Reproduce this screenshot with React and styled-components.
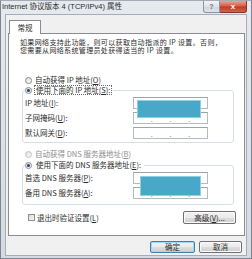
import styled, { createGlobalStyle } from "styled-components";

const GlobalStyle = createGlobalStyle`
  html, body {
    margin: 0;
    padding: 0;
    background: #ffffff;
  }
  body {
    font-family: "Noto Sans CJK SC", "Liberation Sans", sans-serif;
    font-size: 7.5px;
    line-height: 8px;
    color: #2b2b2b;
  }
  * {
    box-sizing: border-box;
  }
`;

const Window = styled.div`
  width: 252px;
  height: 259px;
  display: flex;
  flex-direction: column;
  background: linear-gradient(180deg, #e6e9ee 0%, #d5dae1 100%);
  border: 1px solid #7b8692;
  border-top-color: #a3acb6;
`;

const TitleBar = styled.div`
  height: 13px;
  display: flex;
  align-items: flex-start;
  padding-left: 1px;
  padding-right: 4px;
`;

const Title = styled.div`
  flex: 1;
  padding-top: 2px;
  font-family: "Liberation Sans", "Noto Sans CJK SC", sans-serif;
  color: #2a2a2a;
  white-space: nowrap;
`;

const CaptionButton = styled.div`
  height: 12px;
  width: ${(p) => p.$w}px;
  display: flex;
  align-items: center;
  justify-content: center;
  font-family: "Liberation Sans", sans-serif;
  font-weight: bold;
  font-size: ${(p) => (p.$close ? 8 : 7)}px;
  color: ${(p) => (p.$close ? "#ffffff" : "#6b7480")};
  border: 1px solid ${(p) => (p.$close ? "#8a3426" : "#8b95a1")};
  border-top: none;
  border-left: ${(p) => (p.$close ? "none" : undefined)};
  border-radius: ${(p) => (p.$close ? "0 0 3px 0" : "0 0 0 3px")};
  background: ${(p) =>
    p.$close
      ? "linear-gradient(180deg, #e9a295 0%, #d5604a 45%, #c13b25 55%, #d7614a 100%)"
      : "linear-gradient(180deg, #f2f4f7 0%, #dde2e8 50%, #cfd5dd 55%, #dfe4ea 100%)"};
`;

const Client = styled.div`
  flex: 1;
  margin: 0 4px 2px 4px;
  background: #f0f0f0;
  border: 1px solid #a4adb8;
  padding: 5px 1px 0 2px;
  display: flex;
  flex-direction: column;
`;

const Tab = styled.div`
  width: 32px;
  height: 14px;
  margin-left: 1px;
  margin-bottom: -1px;
  position: relative;
  z-index: 1;
  background: #ffffff;
  border: 1px solid #898c95;
  border-bottom: none;
  display: flex;
  align-items: center;
  justify-content: center;
  padding-top: 1px;
`;

const Panel = styled.div`
  height: 203px;
  background: #ffffff;
  border: 1px solid #898c95;
  display: flex;
  flex-direction: column;
`;

const Description = styled.div`
  margin-top: 4px;
  padding-left: 11px;
  font-size: 7px;
  line-height: 8px;
  letter-spacing: 0.35px;
  white-space: nowrap;
`;

const OptionRow = styled.div`
  display: flex;
  align-items: center;
  gap: 3px;
  height: 8px;
  margin-top: ${(p) => p.$top}px;
  padding-left: 16px;
  color: ${(p) => (p.$disabled ? "#8e8e8e" : "inherit")};
`;

const Radio = styled.span`
  width: 7px;
  height: 7px;
  flex-shrink: 0;
  border-radius: 50%;
  border: 1px solid ${(p) => (p.$disabled ? "#c2c2c2" : "#8a8a8a")};
  background: linear-gradient(135deg, #dcdcdc 0%, #fbfbfb 100%);
  display: flex;
  align-items: center;
  justify-content: center;
  &::after {
    content: "";
    width: 3px;
    height: 3px;
    border-radius: 50%;
    background: ${(p) => (p.$checked ? "#1d3f6e" : "transparent")};
  }
`;

const Group = styled.fieldset`
  margin: ${(p) => p.$top}px 0 0 13px;
  width: 212px;
  padding: 2px 2px ${(p) => p.$bottom}px 2px;
  border: 1px solid #d5dfe5;
  border-radius: 3px;
  min-inline-size: 0;
`;

const Legend = styled.legend`
  padding: 0 1px 0 0;
  display: flex;
  align-items: center;
  gap: 2px;
  height: 10px;
`;

const LegendLabel = styled.span`
  padding: 0 1px;
  height: 10px;
  line-height: 8px;
  border: 1px dotted ${(p) => (p.$focused ? "#6a6a6a" : "transparent")};
`;

const GroupBody = styled.div`
  display: flex;
`;

const Labels = styled.div`
  width: 108px;
  display: flex;
  flex-direction: column;
  gap: 3px;
`;

const Label = styled.div`
  height: 12px;
  display: flex;
  align-items: center;
  white-space: nowrap;
`;

const Fields = styled.div`
  position: relative;
  width: 75px;
  display: flex;
  flex-direction: column;
  gap: 3px;
`;

const Field = styled.div`
  height: 12px;
  background: #ffffff;
  border: 1px solid #b5b9c1;
  border-top-color: #9ea3ab;
  display: flex;
  align-items: flex-end;
`;

const Segment = styled.span`
  flex: 1;
`;

const Dot = styled.span`
  font-size: 7px;
  line-height: 7px;
  color: #7a7a7a;
`;

const Redaction = styled.div`
  position: absolute;
  background: #48a8c8;
  border: 1px solid #8fd0e3;
`;

const BottomRow = styled.div`
  margin-top: 6px;
  display: flex;
  align-items: center;
  justify-content: space-between;
  padding: 0 8px 0 19px;
`;

const CheckLabel = styled.div`
  display: flex;
  align-items: center;
  gap: 2px;
`;

const Checkbox = styled.span`
  width: 7px;
  height: 7px;
  border: 1px solid #8e8f8f;
  background: linear-gradient(135deg, #d8d8d8 0%, #f7f7f7 100%);
`;

const Button = styled.div`
  width: ${(p) => p.$w}px;
  height: ${(p) => p.$h}px;
  display: flex;
  align-items: center;
  justify-content: center;
  border: 1px solid ${(p) => (p.$default ? "#3c7fb1" : "#707070")};
  border-radius: 2px;
  box-shadow: inset 0 0 0 1px ${(p) => (p.$default ? "#9fd9f4" : "#fbfbfb")};
  background: linear-gradient(180deg, #f2f2f2 0%, #ebebeb 50%, #dddddd 51%, #cfcfcf 100%);
  white-space: nowrap;
`;

const Footer = styled.div`
  margin-top: 5px;
  display: flex;
  justify-content: flex-end;
  gap: 4px;
  padding-right: 3px;
`;

const IpField = () => (
  <Field>
    <Segment />
    <Dot>.</Dot>
    <Segment />
    <Dot>.</Dot>
    <Segment />
    <Dot>.</Dot>
    <Segment />
  </Field>
);

export default function App() {
  return (
    <>
      <GlobalStyle />
      <Window>
        <TitleBar>
          <Title>Internet 协议版本 4 (TCP/IPv4) 属性</Title>
          <CaptionButton $w={17}>?</CaptionButton>
          <CaptionButton $w={27} $close>
            x
          </CaptionButton>
        </TitleBar>
        <Client>
          <Tab>常规</Tab>
          <Panel>
            <Description>
              如果网络支持此功能，则可以获取自动指派的 IP 设置。否则，
              <br />
              您需要从网络系统管理员处获得适当的 IP 设置。
            </Description>

            <OptionRow $top={22}>
              <Radio />
              <span>
                自动获得 IP 地址(<u>O</u>)
              </span>
            </OptionRow>

            <Group $top={1} $bottom={3}>
              <Legend>
                <Radio $checked />
                <LegendLabel $focused>
                  使用下面的 IP 地址(<u>S</u>):
                </LegendLabel>
              </Legend>
              <GroupBody>
                <Labels>
                  <Label>
                    IP 地址(<u>I</u>):
                  </Label>
                  <Label>
                    子网掩码(<u>U</u>):
                  </Label>
                  <Label>
                    默认网关(<u>D</u>):
                  </Label>
                </Labels>
                <Fields>
                  <IpField />
                  <IpField />
                  <IpField />
                  <Redaction style={{ left: 4, top: 3, width: 64, height: 18 }} />
                </Fields>
              </GroupBody>
            </Group>

            <OptionRow $top={7} $disabled>
              <Radio $disabled />
              <span>
                自动获得 DNS 服务器地址(<u>B</u>)
              </span>
            </OptionRow>

            <Group $top={2} $bottom={5}>
              <Legend>
                <Radio $checked />
                <LegendLabel>
                  使用下面的 DNS 服务器地址(<u>E</u>):
                </LegendLabel>
              </Legend>
              <GroupBody>
                <Labels>
                  <Label>
                    首选 DNS 服务器(<u>P</u>):
                  </Label>
                  <Label>
                    备用 DNS 服务器(<u>A</u>):
                  </Label>
                </Labels>
                <Fields>
                  <IpField />
                  <IpField />
                  <Redaction style={{ left: 7, top: 4, width: 61, height: 20 }} />
                </Fields>
              </GroupBody>
            </Group>

            <BottomRow>
              <CheckLabel>
                <Checkbox />
                <span>
                  退出时验证设置(<u>L</u>)
                </span>
              </CheckLabel>
              <Button $w={53} $h={13}>
                高级(<u>V</u>)...
              </Button>
            </BottomRow>
          </Panel>
          <Footer>
            <Button $w={45} $h={12} $default>
              确定
            </Button>
            <Button $w={43} $h={12}>
              取消
            </Button>
          </Footer>
        </Client>
      </Window>
    </>
  );
}
